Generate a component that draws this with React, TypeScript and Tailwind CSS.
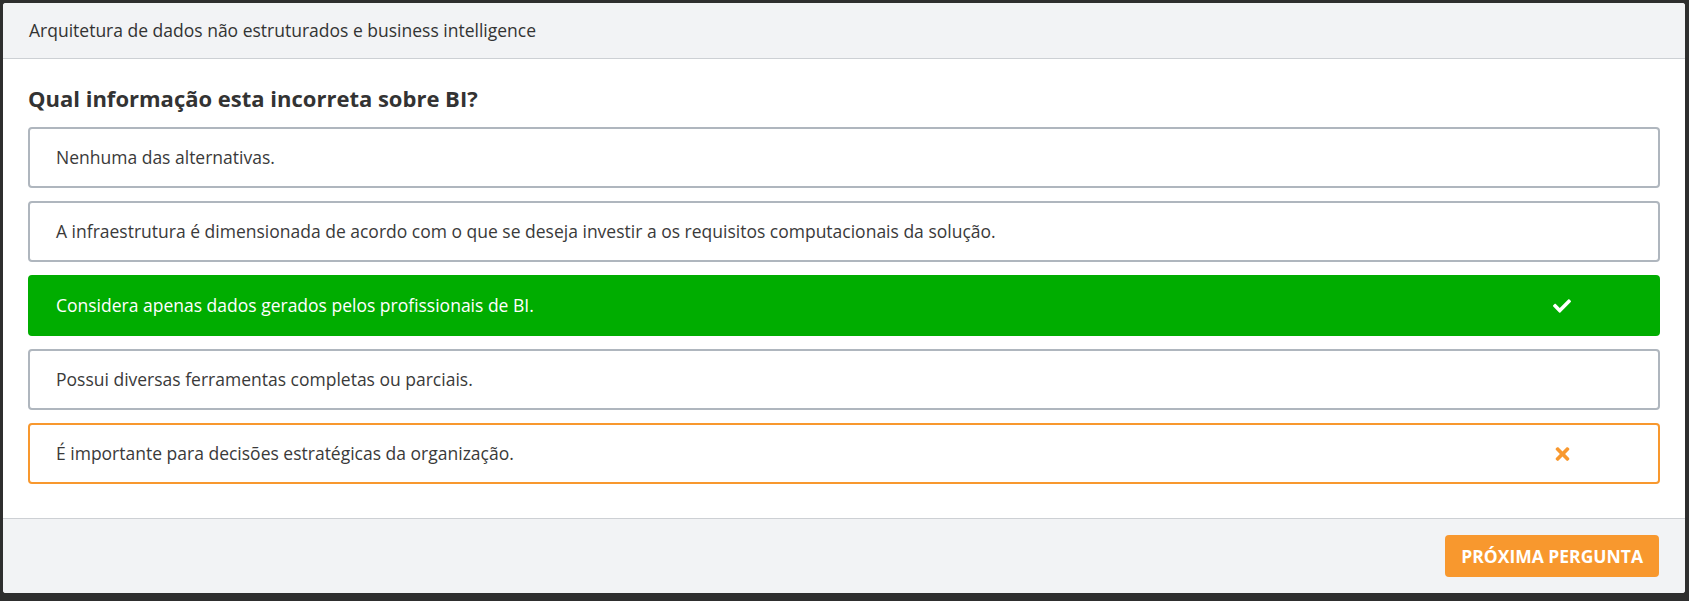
import React from 'react';
import { FaCheck, FaTimes } from 'react-icons/fa';

type Status = 'idle' | 'correct' | 'wrong';

interface Option {
  text: string;
  status: Status;
}

const options: Option[] = [
  { text: 'Nenhuma das alternativas.', status: 'idle' },
  {
    text: 'A infraestrutura é dimensionada de acordo com o que se deseja investir a os requisitos computacionais da solução.',
    status: 'idle',
  },
  { text: 'Considera apenas dados gerados pelos profissionais de BI.', status: 'correct' },
  { text: 'Possui diversas ferramentas completas ou parciais.', status: 'idle' },
  { text: 'É importante para decisões estratégicas da organização.', status: 'wrong' },
];

const boxStyles: Record<Status, string> = {
  idle: 'border-[#afb6be] bg-white text-[#3a3a3a]',
  correct: 'border-[#00ad00] bg-[#00ad00] text-white',
  wrong: 'border-[#f8982e] bg-white text-[#3a3a3a]',
};

const AnswerRow: React.FC<{ option: Option }> = ({ option }) => (
  <div
    className={`flex h-[61px] items-center rounded-[4px] border-2 pl-[26px] text-[17.5px] ${boxStyles[option.status]}`}
  >
    <span className="flex-1">{option.text}</span>
    <span className="mr-[76px] flex w-[40px] justify-center">
      {option.status === 'correct' && <FaCheck className="h-[18px] w-[18px] text-white" />}
      {option.status === 'wrong' && <FaTimes className="h-[20px] w-[15px] text-[#f8982e]" />}
    </span>
  </div>
);

export default function App() {
  return (
    <div
      className="h-[601px] w-full bg-[#2e2e2e] pb-[8px] pl-[3px] pr-[4px] pt-[3px]"
      style={{ fontFamily: '"Open Sans", "Noto Sans", sans-serif' }}
    >
      <div className="flex h-full flex-col overflow-hidden rounded-[3px] bg-white">
        {/* Header */}
        <div className="flex h-[56px] items-center border-b border-[#cdd0d4] bg-[#f2f3f5] px-[26px] text-[17.5px] text-[#333]">
          Arquitetura de dados não estruturados e business intelligence
        </div>

        {/* Question */}
        <div className="flex-1 px-[25px] pt-[24px]">
          <h2 className="text-[22px] font-bold leading-[30px] text-[#333]">
            Qual informação esta incorreta sobre BI?
          </h2>
          <div className="mt-[14px] flex flex-col gap-[13px]">
            {options.map((o) => (
              <AnswerRow key={o.text} option={o} />
            ))}
          </div>
        </div>

        {/* Footer */}
        <div className="flex h-[75px] items-center justify-end border-t border-[#cdd0d4] bg-[#f2f3f5] px-[26px]">
          <button className="h-[42px] rounded-[4px] bg-[#f8982e] px-[16px] text-[17.5px] font-bold uppercase text-white">
            Próxima pergunta
          </button>
        </div>
      </div>
    </div>
  );
}
